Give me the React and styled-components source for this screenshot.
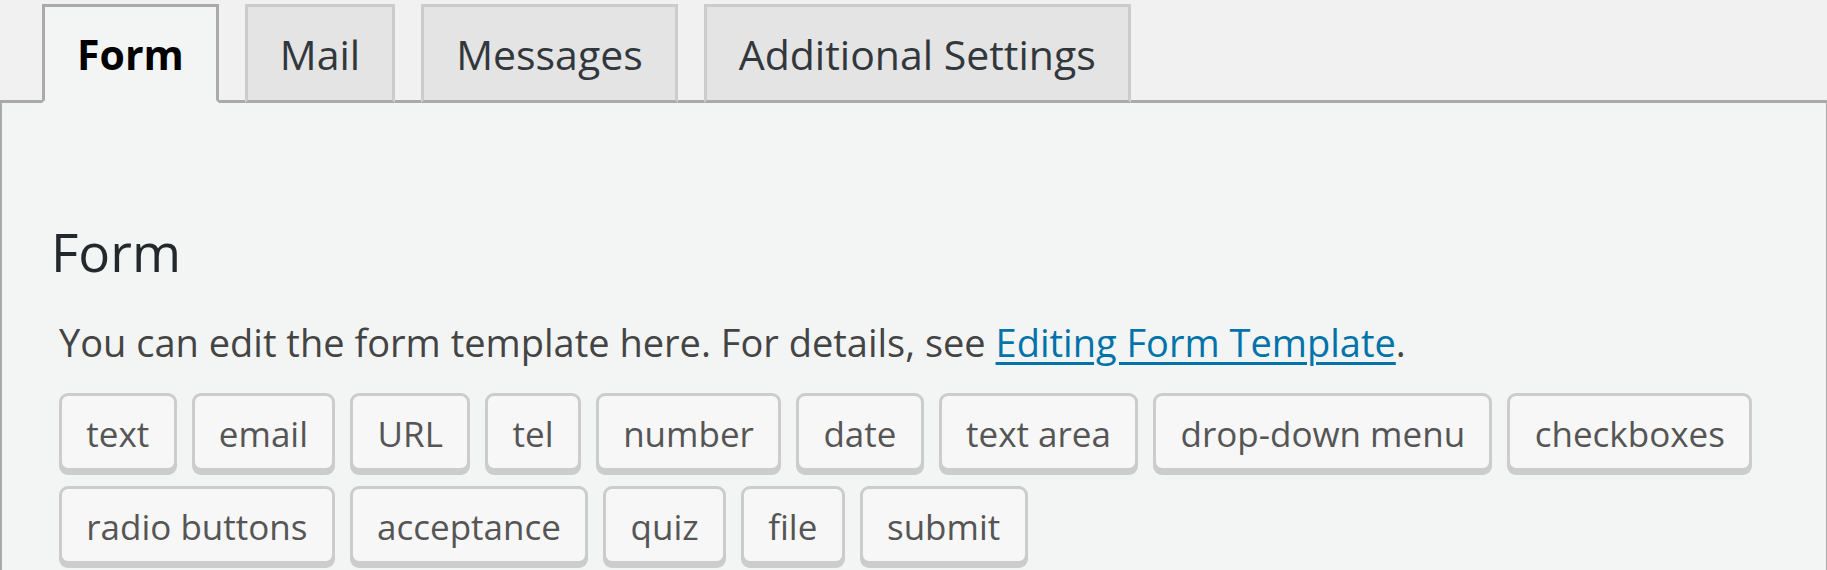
import React, { useState } from "react";
import styled, { createGlobalStyle } from "styled-components";

const GlobalStyle = createGlobalStyle`
  html, body {
    margin: 0;
    padding: 0;
    background-color: #f1f1f1;
    font-family: "Open Sans", "Noto Sans", sans-serif;
  }
`;

const Page = styled.div`
  padding-top: 4px;
`;

const TabBar = styled.ul`
  display: flex;
  gap: 26px;
  margin: 0;
  padding: 0 0 0 42px;
  list-style: none;
`;

const Tab = styled.li`
  margin-bottom: -3px;
  border: 3px solid ${({ $active }) => ($active ? "#aaa" : "#ccc")};
  border-bottom-color: ${({ $active }) => ($active ? "#f3f5f4" : "#aaa")};
  background-color: ${({ $active }) => ($active ? "#f3f5f4" : "#e4e4e4")};
  position: relative;
  z-index: 1;
`;

const TabLink = styled.a`
  display: block;
  height: 93px;
  padding: 2px 32px 0;
  box-sizing: border-box;
  line-height: 91px;
  font-size: 41px;
  font-weight: ${({ $active }) => ($active ? 700 : 400)};
  color: ${({ $active }) => ($active ? "#000" : "#32373c")};
  text-decoration: none;
  cursor: pointer;
`;

const Panel = styled.div`
  background-color: #f3f5f4;
  border-top: 3px solid #aaa;
  border-left: 2px solid #aaa;
  border-right: 1px solid #aaa;
  padding: 0 0 20px 47px;
  min-height: 470px;
`;

const Heading = styled.h2`
  margin: 117px 0 0 2px;
  font-size: 53px;
  font-weight: 400;
  line-height: 1.2;
  color: #23282d;
`;

const Description = styled.p`
  margin: 34px 0 0 10px;
  font-size: 38px;
  line-height: 49px;
  color: #444;
`;

const DocLink = styled.a`
  color: #0073aa;
  text-decoration: underline;
  text-underline-offset: 5px;
  text-decoration-thickness: 3px;
`;

const TagList = styled.div`
  display: flex;
  flex-wrap: wrap;
  gap: 15px;
  margin: 26px 0 0 10px;
`;

const TagButton = styled.button`
  height: 78px;
  padding: 4px 24.3px 0;
  box-sizing: border-box;
  border: 3px solid #ccc;
  border-radius: 9px;
  background-color: #f7f7f7;
  box-shadow: 0 4px 0 #ccc;
  font-family: inherit;
  font-size: 35px;
  line-height: 68px;
  color: #555;
  white-space: nowrap;
  cursor: pointer;
`;

const tabs = ["Form", "Mail", "Messages", "Additional Settings"];

const tags = [
  "text",
  "email",
  "URL",
  "tel",
  "number",
  "date",
  "text area",
  "drop-down menu",
  "checkboxes",
  "radio buttons",
  "acceptance",
  "quiz",
  "file",
  "submit",
];

const App = () => {
  const [active, setActive] = useState("Form");

  return (
    <Page>
      <GlobalStyle />
      <TabBar>
        {tabs.map((t) => (
          <Tab key={t} $active={t === active}>
            <TabLink $active={t === active} onClick={() => setActive(t)}>
              {t}
            </TabLink>
          </Tab>
        ))}
      </TabBar>
      <Panel>
        <Heading>Form</Heading>
        <Description>
          You can edit the form template here. For details, see{" "}
          <DocLink href="#">Editing Form Template</DocLink>.
        </Description>
        <TagList>
          {tags.map((t) => (
            <TagButton key={t}>{t}</TagButton>
          ))}
        </TagList>
      </Panel>
    </Page>
  );
};

export default App;
